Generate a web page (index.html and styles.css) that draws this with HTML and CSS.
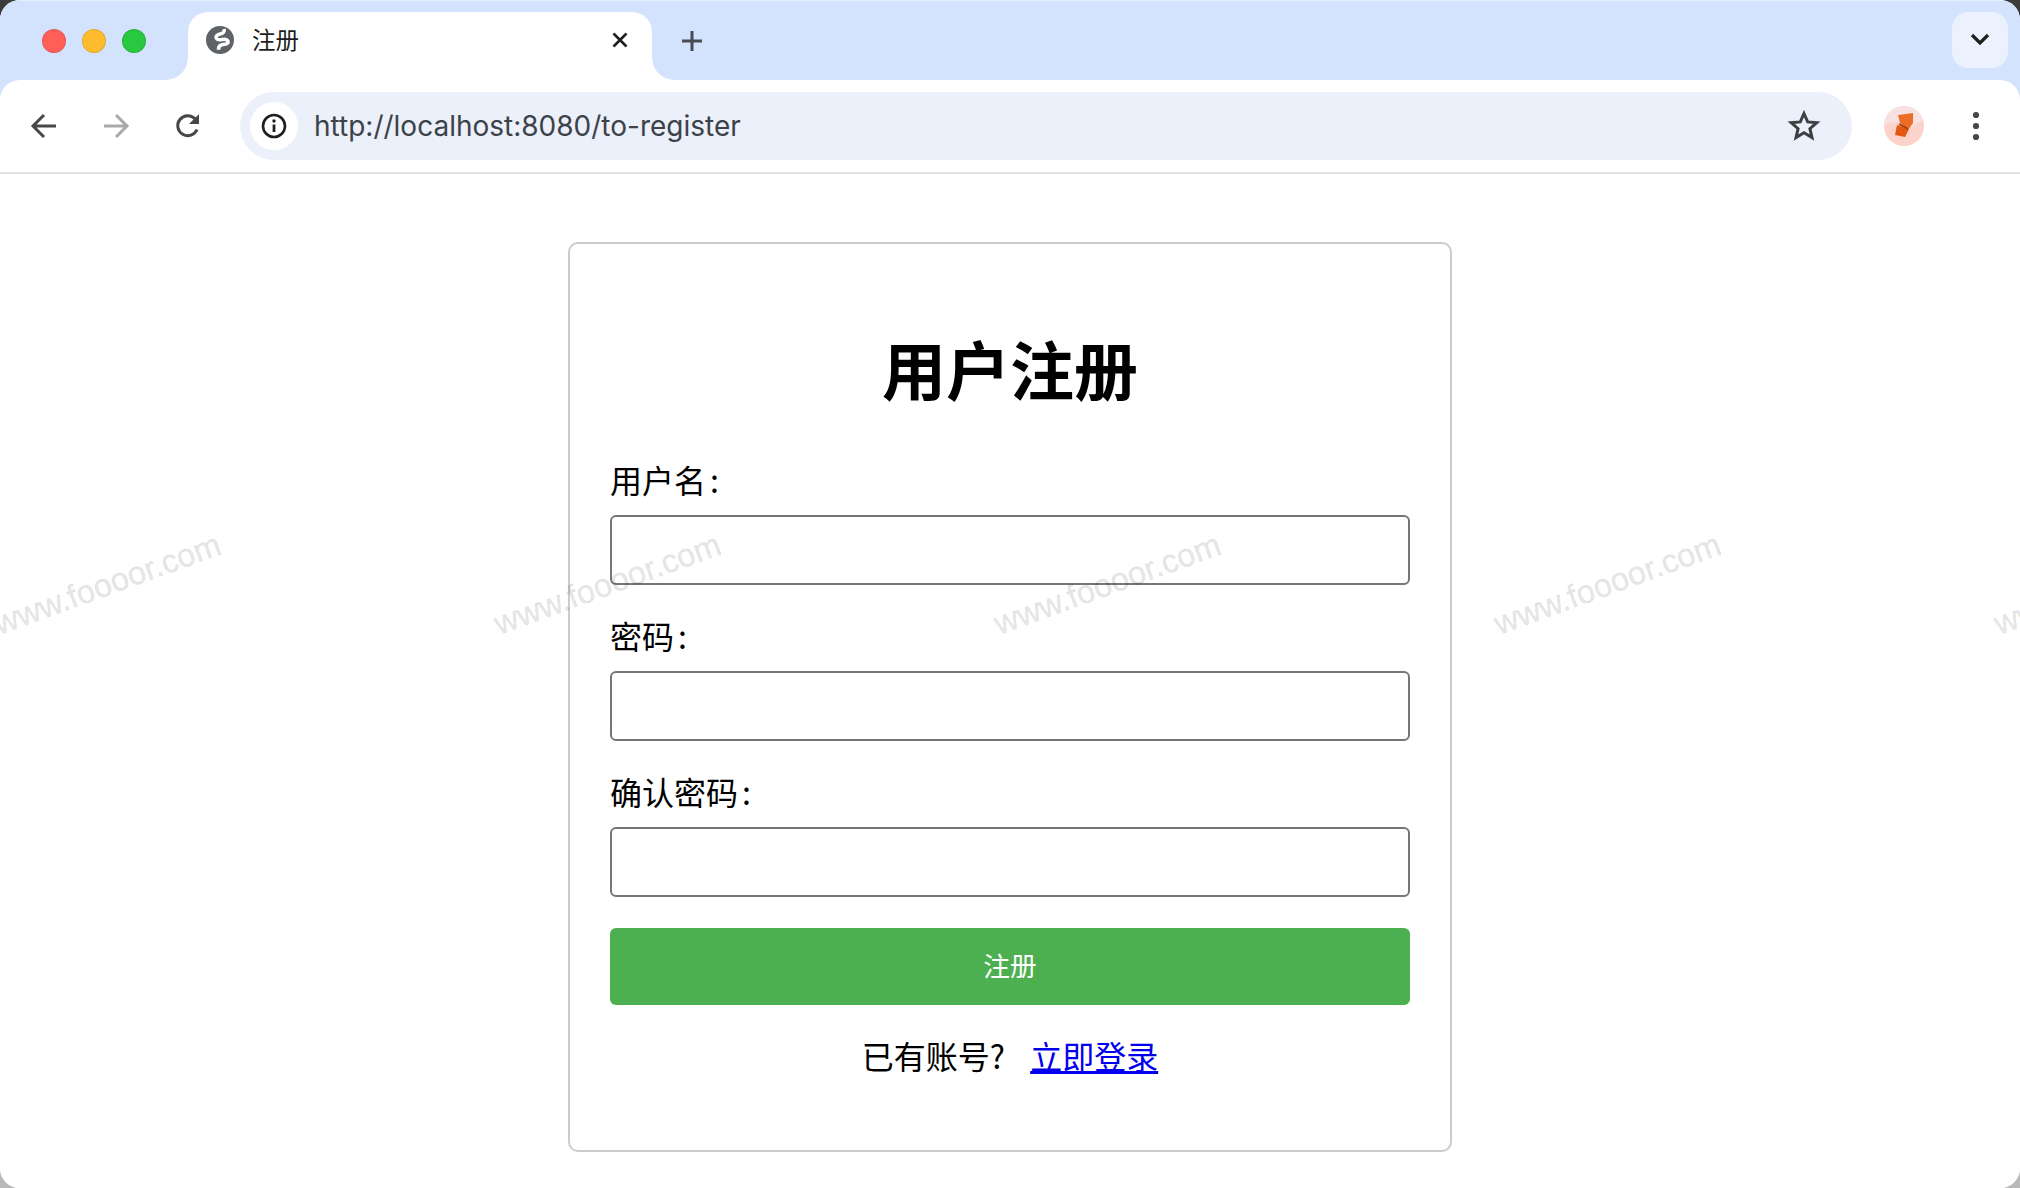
FILE: index.html
```html
<!DOCTYPE html>
<html lang="zh-CN">
<head>
<meta charset="utf-8">
<title>注册</title>
<link rel="stylesheet" href="styles.css">
</head>
<body>
<div class="window">
  <header class="chrome">
    <div class="tabstrip">
      <div class="lights">
        <span class="light red"></span>
        <span class="light yellow"></span>
        <span class="light green"></span>
      </div>
      <div class="tab">
        <svg class="globe" width="28" height="28" viewBox="0 0 28 28">
          <circle cx="14" cy="14" r="14" fill="#5f6368"/>
          <path d="M18 3c1 3-1.500 4.500-4 5-3 .6-4.500 2.500-3.500 4.500 1 1.800 3.500 1.500 6 1 3-.6 6 .5 5.500 3-.4 1.800-3.500 1.800-6 2.200-2.500.3-3.500 2-3.500 5" stroke="#fff" stroke-width="3.600" fill="none"/>
        </svg>
        <span class="tab-title">注册</span>
        <svg class="tab-close" width="20" height="20" viewBox="0 0 20 20">
          <path d="M3.500 3.500l13 13M16.500 3.500l-13 13" stroke="#1f1f1f" stroke-width="2.600" fill="none"/>
        </svg>
      </div>
      <svg class="new-tab" width="24" height="24" viewBox="0 0 24 24">
        <path d="M12 2v20M2 12h20" stroke="#474b52" stroke-width="3" fill="none"/>
      </svg>
      <div class="tab-search">
        <svg width="24" height="16" viewBox="0 0 24 16">
          <path d="M4 3l8 8 8-8" stroke="#1f1f1f" stroke-width="3.200" fill="none"/>
        </svg>
      </div>
    </div>
    <div class="toolbar">
      <div class="nav-btn">
        <svg width="30" height="30" viewBox="0 0 30 30">
          <path d="M27 15H5M15 4L4 15l11 11" stroke="#474747" stroke-width="3" fill="none"/>
        </svg>
      </div>
      <div class="nav-btn">
        <svg width="30" height="30" viewBox="0 0 30 30">
          <path d="M3 15h22M15 4l11 11-11 11" stroke="#a9a9a9" stroke-width="3" fill="none"/>
        </svg>
      </div>
      <div class="nav-btn">
        <svg width="30" height="30" viewBox="0 0 30 30">
          <path d="M24 18.500A10 10 0 1 1 22 7.800L25 11" stroke="#474747" stroke-width="3" fill="none"/>
          <path d="M26 3v10H16z" fill="#474747"/>
        </svg>
      </div>
      <div class="omnibox">
        <div class="info-chip">
          <svg width="28" height="28" viewBox="0 0 28 28">
            <circle cx="14" cy="14" r="11" stroke="#1f1f1f" stroke-width="2.600" fill="none"/>
            <circle cx="14" cy="9" r="1.700" fill="#1f1f1f"/>
            <path d="M14 12.500V20" stroke="#1f1f1f" stroke-width="2.800"/>
          </svg>
        </div>
        <span class="url">http://localhost:8080/to-register</span>
        <svg class="star" width="34" height="34" viewBox="0 0 34 34">
          <path d="M17 4.500l3.700 8.400 9.100.8-6.900 6 2.100 8.900-8-4.800-8 4.800 2.100-8.900-6.900-6 9.100-.8z" stroke="#3d4043" stroke-width="3" stroke-linejoin="miter" fill="none"/>
        </svg>
      </div>
      <svg class="avatar" width="40" height="40" viewBox="0 0 40 40">
        <circle cx="20" cy="20" r="20" fill="#fbd3cb"/>
        <path d="M0 20A20 20 0 0 1 39 14L27 21 12 16 1 18z" fill="#f8e1e3"/>
        <path d="M14 9l15-2v10l-5 7-8-7z" fill="#ec6d25"/>
        <path d="M13 19l12 4-4 8-10-2z" fill="#e4590f"/>
        <path d="M15 18l9 5" stroke="#9c3d12" stroke-width="1.500"/>
      </svg>
      <svg class="menu" width="8" height="30" viewBox="0 0 8 30">
        <circle cx="4" cy="4" r="3.100" fill="#474747"/>
        <circle cx="4" cy="15" r="3.100" fill="#474747"/>
        <circle cx="4" cy="26" r="3.100" fill="#474747"/>
      </svg>
    </div>
  </header>
  <main class="page">
    <form class="card">
      <h1 class="title">用户注册</h1>
      <div class="field">
        <label class="label" for="username">用户名<span class="colon">:</span></label>
        <input class="input" id="username" type="text">
      </div>
      <div class="field">
        <label class="label" for="password">密码<span class="colon">:</span></label>
        <input class="input" id="password" type="password">
      </div>
      <div class="field">
        <label class="label" for="confirm">确认密码<span class="colon">:</span></label>
        <input class="input" id="confirm" type="password">
      </div>
      <button class="submit" type="button">注册</button>
      <p class="footer">已有账号? <a class="link" href="#">立即登录</a></p>
    </form>
  </main>
  <div class="watermarks">
    <span class="mark">www.foooor.com</span>
    <span class="mark">www.foooor.com</span>
    <span class="mark">www.foooor.com</span>
    <span class="mark">www.foooor.com</span>
    <span class="mark">www.foooor.com</span>
  </div>
</div>
</body>
</html>
```
FILE: styles.css
```css
html, body {
  margin: 0;
  height: 1188px;
  overflow: hidden;
}
body {
  background: linear-gradient(#3c3c3c 0 600px, #b9b9b9 600px);
  font-family: "Noto Sans CJK SC", "Liberation Sans", sans-serif;
  color: #000;
}
.window {
  position: relative;
  width: 2020px;
  height: 1188px;
  display: flex;
  flex-direction: column;
  overflow: hidden;
  border-radius: 20px;
  background: #fff;
}
.chrome {
  background: #d3e3fd;
  border-top: 1px solid #e6eefc;
  flex: none;
}
.tabstrip {
  height: 79px;
  display: flex;
  align-items: flex-start;
}
.lights {
  display: flex;
  gap: 16px;
  padding: 28px 0 0 42px;
}
.light {
  width: 24px;
  height: 24px;
  border-radius: 50%;
  box-sizing: border-box;
  border: 1px solid rgba(0, 0, 0, .1);
}
.red { background: #ff5f57; }
.yellow { background: #febc2e; }
.green { background: #28c840; }
.tab {
  position: relative;
  margin: 11px 0 0 42px;
  width: 464px;
  height: 68px;
  box-sizing: border-box;
  padding: 0 22px 12px 18px;
  display: flex;
  align-items: center;
  background: #fff;
  border-radius: 20px 20px 0 0;
}
.tab::before,
.tab::after {
  content: "";
  position: absolute;
  bottom: 0;
  width: 22px;
  height: 22px;
}
.tab::before {
  left: -22px;
  background: radial-gradient(circle at 0 0, transparent 21.500px, #fff 22px);
}
.tab::after {
  right: -22px;
  background: radial-gradient(circle at 100% 0, transparent 21.500px, #fff 22px);
}
.tab-title {
  margin-left: 18px;
  padding-bottom: 2px;
  font-size: 23.500px;
  line-height: 32px;
  color: #1f1f1f;
}
.tab-close {
  margin-left: auto;
}
.new-tab {
  margin: 28px 0 0 28px;
}
.tab-search {
  margin: 11px 12px 0 auto;
  width: 56px;
  height: 56px;
  border-radius: 16px;
  background: #ebf1fd;
  display: flex;
  align-items: center;
  justify-content: center;
}
.toolbar {
  height: 92px;
  box-sizing: content-box;
  padding-left: 8px;
  display: flex;
  align-items: center;
  background: #fff;
  border-radius: 20px 20px 0 0;
  border-bottom: 2px solid #e3e3e3;
}
.nav-btn {
  width: 72px;
  display: flex;
  justify-content: center;
}
.omnibox {
  margin-left: 16px;
  width: 1612px;
  height: 68px;
  border-radius: 34px;
  background: #ebf0fa;
  display: flex;
  align-items: center;
}
.info-chip {
  margin-left: 10px;
  width: 48px;
  height: 48px;
  border-radius: 50%;
  background: #fff;
  display: flex;
  align-items: center;
  justify-content: center;
}
.url {
  margin-left: 16px;
  font-family: Inter, "Liberation Sans", sans-serif;
  font-size: 28px;
  color: #3d4249;
}
.star {
  margin-left: auto;
  margin-right: 31px;
}
.avatar {
  margin-left: 32px;
}
.menu {
  margin-left: 48px;
}
.page {
  flex: 1;
  display: flex;
  justify-content: center;
  align-items: flex-start;
  background: #fff;
}
.card {
  margin-top: 68px;
  width: 884px;
  box-sizing: border-box;
  padding: 42px 40px 0;
  border: 2px solid #ccc;
  border-radius: 10px;
  background: #fff;
}
.title {
  margin: 35px 0 46px;
  font-size: 64px;
  line-height: 92px;
  font-weight: 700;
  text-align: center;
}
.field {
  margin-bottom: 30px;
}
.label {
  display: block;
  margin-bottom: 16px;
  font-size: 32px;
  line-height: 40px;
}
.colon {
  margin-left: 4px;
}
.input {
  display: block;
  width: 100%;
  height: 70px;
  box-sizing: border-box;
  border: 2px solid #767676;
  border-radius: 6px;
  background: transparent;
}
.submit {
  display: block;
  width: 100%;
  height: 77px;
  margin-top: 31px;
  padding: 0 0 5px;
  border: 0;
  border-radius: 6px;
  background: #4caf50;
  color: #fff;
  font-family: inherit;
  font-size: 26.670px;
}
.footer {
  margin: 27px 0 72px;
  font-size: 32px;
  line-height: 46px;
  text-align: center;
}
.link {
  margin-left: 18px;
  color: #0000ee;
  text-decoration: underline;
}
.watermarks {
  position: absolute;
  top: 564px;
  left: -12px;
  display: flex;
  gap: 256px;
  pointer-events: none;
}
.mark {
  flex: none;
  width: 244px;
  font-family: "Liberation Sans", sans-serif;
  font-size: 32.500px;
  line-height: 38px;
  white-space: nowrap;
  color: rgba(0, 0, 0, .11);
  -webkit-text-stroke: .8px rgba(0, 0, 0, .08);
  transform: rotate(-20deg);
}
```
